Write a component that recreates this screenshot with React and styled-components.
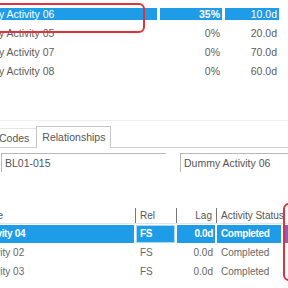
import React from "react";
import styled, { createGlobalStyle } from "styled-components";

const Global = createGlobalStyle`
  html, body {
    margin: 0;
    background: #fff;
  }
  body {
    font-family: "Liberation Sans", Arial, sans-serif;
  }
`;

const Screen = styled.div`
  position: relative;
  width: 288px;
  height: 288px;
  overflow: hidden;
  background: #fff;
`;

const TopTable = styled.div`
  margin-left: -35px;
  padding-top: 4px;
  height: 76px;
`;

const TopRow = styled.div`
  display: grid;
  grid-template-columns: 192px 62px 54px;
  column-gap: 3px;
  height: 19px;
  align-items: center;
`;

const TopCell = styled.div`
  height: 12px;
  line-height: 12px;
  font-size: 10.5px;
  padding: ${(p) => (p.$right ? "0 2px 0 0" : "0 0 0 3px")};
  text-align: ${(p) => (p.$right ? "right" : "left")};
  white-space: nowrap;
  overflow: hidden;
  background: ${(p) => (p.$sel ? "#1f9ce8" : "transparent")};
  color: ${(p) => (p.$sel ? "#fff" : "#5c5c5c")};
  font-weight: ${(p) => (p.$bold ? 700 : 400)};
`;

const Splitter = styled.div`
  margin-top: 40px;
  border-top: 1px solid #eeeeee;
`;

const TabStrip = styled.div`
  display: flex;
  align-items: flex-end;
  margin-top: 5px;
  height: 21px;
  border-bottom: 1px solid #d0d0d0;
`;

const Tab = styled.div`
  box-sizing: border-box;
  font-size: 10.5px;
  color: #555;
  white-space: nowrap;
  background: #fff;
  ${(p) =>
    p.$active
      ? `
    height: 22px;
    line-height: 21px;
    margin-bottom: -1px;
    padding: 0 5px;
    border: 1px solid #c6c6c6;
    border-bottom: none;
  `
      : `
    height: 19px;
    line-height: 19px;
    margin-left: -8px;
    padding: 0 7px;
    border-top: 1px solid #e4e4e4;
  `}
`;

const Panel = styled.div`
  padding-top: 5px;
`;

const FieldRow = styled.div`
  display: flex;
  gap: 14px;
  margin-right: -30px;
`;

const Field = styled.div`
  box-sizing: border-box;
  height: 19px;
  line-height: 19px;
  padding-left: 3px;
  font-size: 10.5px;
  color: #555;
  white-space: nowrap;
  border-top: 1px solid #b8b8b8;
  border-left: 1px solid #b8b8b8;
  ${(p) => (p.$wide ? "flex: 1;" : "width: 165px; margin-left: 1px;")}
`;

const BottomTable = styled.div`
  margin-top: 36px;
  margin-left: -61px;
`;

const HeadRow = styled.div`
  display: grid;
  grid-template-columns: 196px 41px 40px 1fr;
  height: 15px;
  line-height: 15px;
  font-size: 10px;
  color: #555;
  border-bottom: 1px solid #e4e4e4;
`;

const HeadCell = styled.div`
  white-space: nowrap;
  overflow: hidden;
  border-left: ${(p) => (p.$sep ? "1px solid #777" : "none")};
  text-align: ${(p) => (p.$right ? "right" : "left")};
  padding: ${(p) => (p.$right ? "0 4px 0 0" : p.$sep ? "0 0 0 4px" : "0 0 0 3px")};
`;

const BodyRow = styled.div`
  display: grid;
  grid-template-columns: 195px 39px 38px 64px 12px;
  column-gap: 2px;
  height: 19px;
  padding-top: 1px;
  box-sizing: border-box;
`;

const BodyCell = styled.div`
  box-sizing: border-box;
  height: 18px;
  line-height: 18px;
  font-size: 10px;
  white-space: nowrap;
  overflow: hidden;
  text-align: ${(p) => (p.$right ? "right" : "left")};
  padding: ${(p) => (p.$right ? "0 2px 0 0" : `0 0 0 ${p.$pad || 4}px`)};
  background: ${(p) => (p.$sel ? p.$tint || "#1f9ce8" : "transparent")};
  color: ${(p) => (p.$sel ? "#fff" : "#666")};
  font-weight: ${(p) => (p.$sel ? 700 : 400)};
  letter-spacing: ${(p) => (p.$sel ? "-0.35px" : "0")};
  box-shadow: ${(p) => (p.$focus ? "inset 0 0 0 1px #a9d9f9" : "none")};
`;

const Mark = styled.div`
  position: absolute;
  left: ${(p) => p.$x}px;
  top: ${(p) => p.$y}px;
  width: ${(p) => p.$w}px;
  height: ${(p) => p.$h}px;
  box-sizing: border-box;
  border: 2px solid #e1323b;
  border-radius: 6px;
  pointer-events: none;
`;

const topRows = [
  { name: "Dummy Activity 06", pct: "35%", dur: "10.0d", sel: true },
  { name: "Dummy Activity 05", pct: "0%", dur: "20.0d" },
  { name: "Dummy Activity 07", pct: "0%", dur: "70.0d" },
  { name: "Dummy Activity 08", pct: "0%", dur: "60.0d" },
];

const relRows = [
  { name: "Dummy Activity 04", rel: "FS", lag: "0.0d", status: "Completed", sel: true },
  { name: "Dummy Activity 02", rel: "FS", lag: "0.0d", status: "Completed" },
  { name: "Dummy Activity 03", rel: "FS", lag: "0.0d", status: "Completed" },
];

export default function App() {
  return (
    <>
      <Global />
      <Screen>
        <TopTable>
          {topRows.map((r) => (
            <TopRow key={r.name}>
              <TopCell $sel={r.sel}>{r.name}</TopCell>
              <TopCell $sel={r.sel} $bold={r.sel} $right>
                {r.pct}
              </TopCell>
              <TopCell $sel={r.sel} $right>
                {r.dur}
              </TopCell>
            </TopRow>
          ))}
        </TopTable>

        <Splitter />
        <TabStrip>
          <Tab>Codes</Tab>
          <Tab $active>Relationships</Tab>
        </TabStrip>

        <Panel>
          <FieldRow>
            <Field>BL01-015</Field>
            <Field $wide>Dummy Activity 06</Field>
          </FieldRow>
        </Panel>

        <BottomTable>
          <HeadRow>
            <HeadCell>Activity Name</HeadCell>
            <HeadCell $sep>Rel</HeadCell>
            <HeadCell $sep $right>
              Lag
            </HeadCell>
            <HeadCell $sep>Activity Status</HeadCell>
          </HeadRow>
          {relRows.map((r) => (
            <BodyRow key={r.name}>
              <BodyCell $sel={r.sel} $pad={3}>
                {r.name}
              </BodyCell>
              <BodyCell $sel={r.sel} $focus={r.sel}>
                {r.rel}
              </BodyCell>
              <BodyCell $sel={r.sel} $right>
                {r.lag}
              </BodyCell>
              <BodyCell $sel={r.sel}>{r.status}</BodyCell>
              <BodyCell $sel={r.sel} $tint="#7d63c9" />
            </BodyRow>
          ))}
        </BottomTable>

        <Mark $x={-10} $y={3} $w={155} $h={30} />
        <Mark $x={283} $y={203} $w={30} $h={78} />
      </Screen>
    </>
  );
}
